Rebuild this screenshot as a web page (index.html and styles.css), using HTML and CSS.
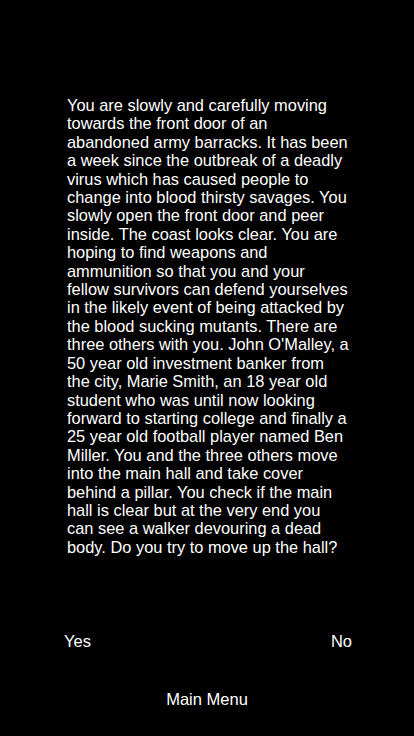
FILE: index.html
```html
<!DOCTYPE html>
<html lang="en">
<head>
  <meta charset="UTF-8">
  <meta name="viewport" content="width=device-width, initial-scale=1.0">
  <title>Story</title>
  <link rel="stylesheet" href="styles.css">
</head>
<body>
  <div class="screen">
    <p class="story">You are slowly and carefully moving towards the front door of an abandoned army barracks. It has been a week since the outbreak of a deadly virus which has caused people to change into blood thirsty savages. You slowly open the front door and peer inside. The coast looks clear. You are hoping to find weapons and ammunition so that you and your fellow survivors can defend yourselves in the likely event of being attacked by the blood sucking mutants. There are three others with you. John O'Malley, a 50 year old investment banker from the city, Marie Smith, an 18 year old student who was until now looking forward to starting college and finally a 25 year old football player named Ben Miller. You and the three others move into the main hall and take cover behind a pillar. You check if the main hall is clear but at the very end you can see a walker devouring a dead body. Do you try to move up the hall?</p>

    <div class="choices">
      <button class="choice">Yes</button>
      <button class="choice">No</button>
    </div>

    <button class="menu-btn">Main Menu</button>
  </div>
</body>
</html>
```

FILE: styles.css
```css
/* General */
body {
  margin: 0;
  padding: 0;
  background: #000;
  color: #fff;
  font-family: 'Liberation Sans', Arial, sans-serif;
}

.screen {
  display: flex;
  flex-direction: column;
  height: 736px;
  box-sizing: border-box;
  padding: 96px 0 27px;
}

/* Story text */
.story {
  margin: 0 0 0 67px;
  width: 284px;
  font-size: 16.4px;
  line-height: 18.4px;
}

/* Buttons */
button {
  background: none;
  border: none;
  color: #fff;
  font-family: inherit;
  font-size: 16.5px;
  padding: 0;
  cursor: pointer;
}

.choices {
  margin-top: auto;
  display: flex;
  justify-content: space-between;
  padding: 0 62px 0 64px;
  line-height: 20px;
}

.menu-btn {
  align-self: center;
  margin-top: 38px;
  line-height: 20px;
}
```
